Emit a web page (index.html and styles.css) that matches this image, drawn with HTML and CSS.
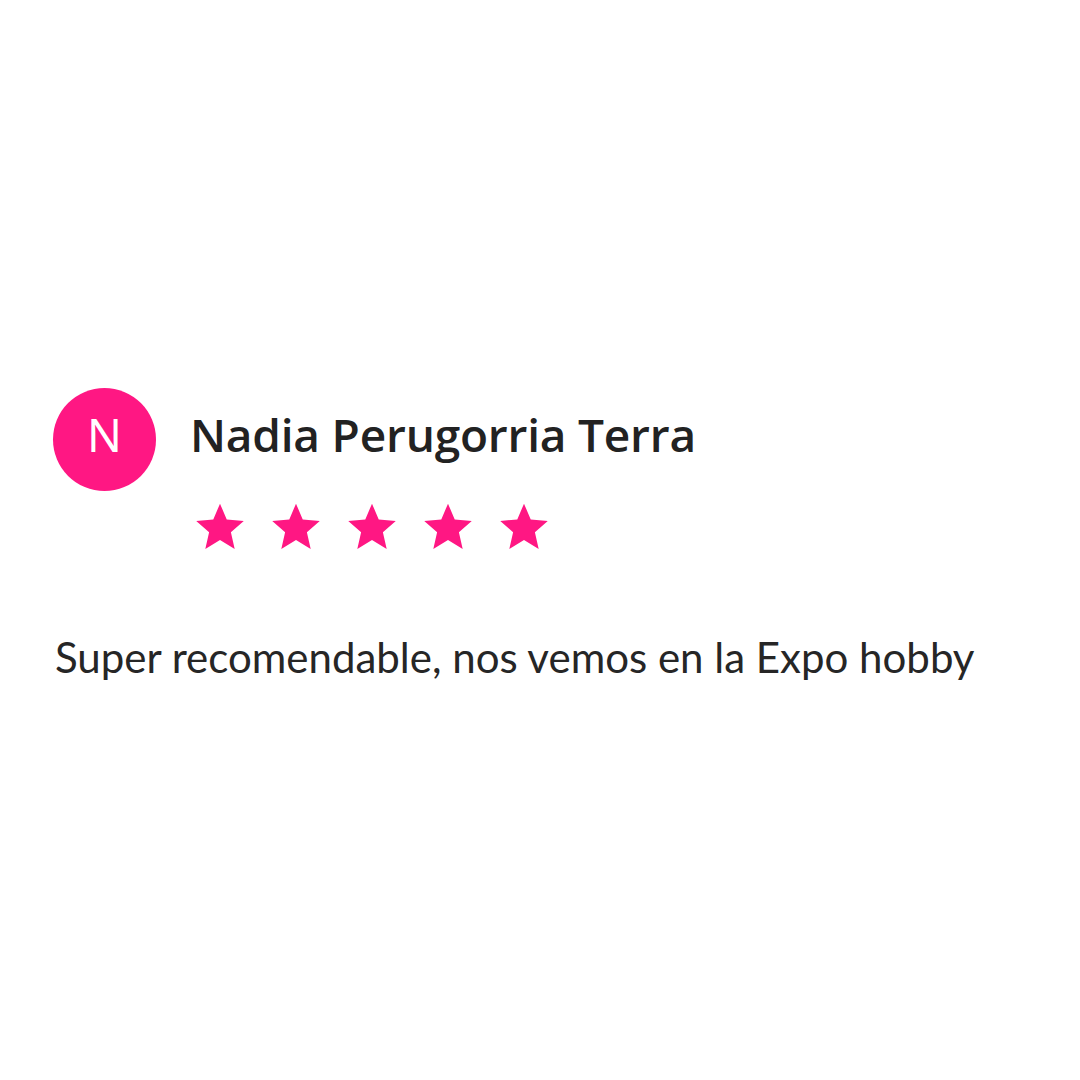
FILE: index.html
```html
<!DOCTYPE html>
<html lang="es">
<head>
    <meta charset="UTF-8">
    <meta name="viewport" content="width=device-width, initial-scale=1.0">
    <title>Reseña</title>
    <link rel="stylesheet" href="styles.css">
</head>
<body>
    <div class="review">
        <div class="review-head">
            <div class="avatar">N</div>
            <div class="review-info">
                <h2 class="author">Nadia Perugorria Terra</h2>
                <div class="stars">
                    <!-- 5 estrellas -->
                    <svg viewBox="0 0 24 24"><path d="M12 .8l3.23 7.55 8.18.74-6.18 5.41 1.82 8.01L12 18.3l-7.05 4.21 1.82-8.01L.59 9.09l8.18-.74z"/></svg>
                    <svg viewBox="0 0 24 24"><path d="M12 .8l3.23 7.55 8.18.74-6.18 5.41 1.82 8.01L12 18.3l-7.05 4.21 1.82-8.01L.59 9.09l8.18-.74z"/></svg>
                    <svg viewBox="0 0 24 24"><path d="M12 .8l3.23 7.55 8.18.74-6.18 5.41 1.82 8.01L12 18.3l-7.05 4.21 1.82-8.01L.59 9.09l8.18-.74z"/></svg>
                    <svg viewBox="0 0 24 24"><path d="M12 .8l3.23 7.55 8.18.74-6.18 5.41 1.82 8.01L12 18.3l-7.05 4.21 1.82-8.01L.59 9.09l8.18-.74z"/></svg>
                    <svg viewBox="0 0 24 24"><path d="M12 .8l3.23 7.55 8.18.74-6.18 5.41 1.82 8.01L12 18.3l-7.05 4.21 1.82-8.01L.59 9.09l8.18-.74z"/></svg>
                </div>
            </div>
        </div>
        <p class="review-text">Super recomendable, nos vemos en la Expo hobby</p>
    </div>
</body>
</html>
```

FILE: styles.css
```css
* {
    margin: 0;
    padding: 0;
    box-sizing: border-box;
}

body {
    font-family: 'Open Sans', 'Noto Sans', sans-serif;
    background-color: #fff;
    color: #222;
}

.review {
    padding: 388px 0 0 53px;
}

.review-head {
    display: flex;
    align-items: flex-start;
    gap: 34px;
}

.avatar {
    width: 103px;
    height: 103px;
    padding-bottom: 12px;
    border-radius: 50%;
    background-color: #ff1783;
    color: #fff;
    font-family: 'Noto Sans', sans-serif;
    font-size: 46px;
    line-height: 1;
    display: flex;
    align-items: center;
    justify-content: center;
}

.author {
    font-size: 46px;
    font-weight: 600;
    line-height: 1;
    margin-top: 23px;
    letter-spacing: -0.2px;
}

.stars {
    display: flex;
    gap: 26px;
    margin-top: 45px;
    padding-left: 5px;
}

.stars svg {
    width: 50px;
    height: 50px;
    fill: #ff1783;
}

.review-text {
    font-family: 'Lato', 'Open Sans', sans-serif;
    font-size: 42px;
    line-height: 1.2;
    font-weight: 400;
    margin-top: 80px;
    margin-left: 2px;
    color: #262626;
}
```
